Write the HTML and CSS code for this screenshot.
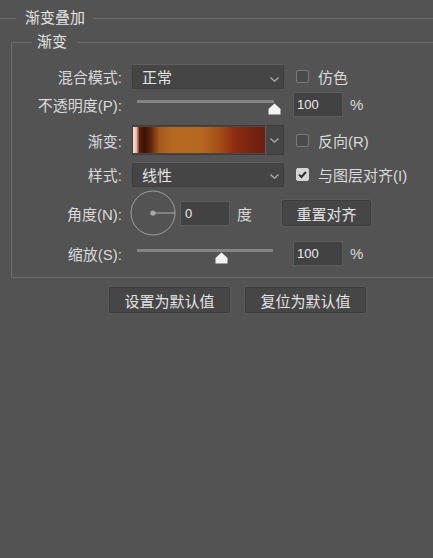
FILE: index.html
```html
<!DOCTYPE html>
<html lang="zh-CN">
<head>
    <meta charset="UTF-8">
    <meta name="viewport" content="width=device-width, initial-scale=1.0">
    <title>渐变叠加</title>
    <link rel="stylesheet" href="styles.css">
</head>
<body>
    <div class="panel">
        <!-- Section title -->
        <div class="section-title">
            <span class="rule rule-short"></span>
            <span class="title-text">渐变叠加</span>
            <span class="rule"></span>
        </div>

        <fieldset class="group">
            <legend>渐变</legend>

            <!-- Blend mode -->
            <div class="row row-a">
                <span class="label">混合模式:</span>
                <div class="dropdown">
                    <span>正常</span>
                    <svg class="chevron" width="9" height="5" viewBox="0 0 9 5"><path d="M0.5 0.5 L4.5 4.2 L8.5 0.5" fill="none" stroke="#b4b4b4" stroke-width="1.1"/></svg>
                </div>
                <div class="check"><span class="box"></span>仿色</div>
            </div>

            <!-- Opacity -->
            <div class="row row-a">
                <span class="label">不透明度(P):</span>
                <div class="slider">
                    <div class="track track-long">
                        <svg class="thumb" style="left: calc(100% - 6.5px);" width="13" height="12" viewBox="0 0 13 12"><path d="M6.5 0.5 L12.5 6 L12.5 11.5 L0.5 11.5 L0.5 6 Z" fill="#f2f2f2"/></svg>
                    </div>
                </div>
                <div class="number">100</div>
                <span class="unit">%</span>
            </div>

            <!-- Gradient -->
            <div class="row row-grad">
                <span class="label">渐变:</span>
                <div class="gradient-picker">
                    <div class="gradient"></div>
                    <div class="gradient-btn">
                        <svg class="chevron" width="9" height="5" viewBox="0 0 9 5"><path d="M0.5 0.5 L4.5 4.2 L8.5 0.5" fill="none" stroke="#b4b4b4" stroke-width="1.1"/></svg>
                    </div>
                </div>
                <div class="check"><span class="box"></span>反向(R)</div>
            </div>

            <!-- Style -->
            <div class="row row-style">
                <span class="label">样式:</span>
                <div class="dropdown">
                    <span>线性</span>
                    <svg class="chevron" width="9" height="5" viewBox="0 0 9 5"><path d="M0.5 0.5 L4.5 4.2 L8.5 0.5" fill="none" stroke="#b4b4b4" stroke-width="1.1"/></svg>
                </div>
                <div class="check">
                    <span class="box checked">
                        <svg width="11" height="11" viewBox="0 0 11 11"><path d="M2 5.6 L4.4 8 L9 3" fill="none" stroke="#2e2e2e" stroke-width="2"/></svg>
                    </span>与图层对齐(I)
                </div>
            </div>

            <!-- Angle -->
            <div class="row row-angle">
                <span class="label">角度(N):</span>
                <svg class="dial" width="46" height="46" viewBox="0 0 46 46">
                    <circle cx="23" cy="23" r="22" fill="none" stroke="#a0a0a0" stroke-width="1"/>
                    <line x1="23" y1="23" x2="45" y2="23" stroke="#b0b0b0" stroke-width="1"/>
                    <circle cx="23" cy="23" r="2.6" fill="#a8a8a8"/>
                </svg>
                <div class="number number-angle">0</div>
                <span class="unit">度</span>
                <div class="button button-reset">重置对齐</div>
            </div>

            <!-- Scale -->
            <div class="row row-a row-scale">
                <span class="label">缩放(S):</span>
                <div class="slider">
                    <div class="track track-short">
                        <svg class="thumb" style="left: calc(62% - 6.5px);" width="13" height="12" viewBox="0 0 13 12"><path d="M6.5 0.5 L12.5 6 L12.5 11.5 L0.5 11.5 L0.5 6 Z" fill="#f2f2f2"/></svg>
                    </div>
                </div>
                <div class="number">100</div>
                <span class="unit">%</span>
            </div>
        </fieldset>

        <!-- Default buttons -->
        <div class="actions">
            <div class="button button-wide">设置为默认值</div>
            <div class="button button-wide">复位为默认值</div>
        </div>
    </div>
</body>
</html>
```

FILE: styles.css
```css
body {
    margin: 0;
    background-color: #535353;
    color: #dadada;
    font-family: "Liberation Sans", "Noto Sans CJK SC", sans-serif;
    font-size: 15px;
}

.panel {
    width: 433px;
    height: 558px;
    overflow: hidden;
}

/* Title with lines on both sides */
.section-title {
    display: flex;
    align-items: center;
    height: 20px;
    margin-top: 8px;
}

.rule {
    flex: 1;
    height: 1px;
    background-color: #6c6c6c;
}

.rule-short {
    flex: none;
    width: 16px;
}

.title-text {
    padding: 0 8px 0 9px;
    line-height: 20px;
    color: #e4e4e4;
}

/* Group box */
.group {
    margin: 4px -4px 0 11px;
    padding: 0 0 11px 0;
    border: 1px solid #6c6c6c;
    min-width: 0;
}

.group legend {
    margin-left: 20px;
    padding: 0 10px 0 5px;
    line-height: 20px;
    color: #e4e4e4;
}

.row {
    display: flex;
    align-items: center;
}

.row-a {
    height: 25px;
    margin-top: 3px;
}

.row-a:first-of-type {
    margin-top: 12px;
}

.row-grad {
    height: 30px;
    margin-top: 8px;
}

.row-style {
    height: 26px;
    margin-top: 6px;
}

.row-angle {
    height: 46px;
    margin-top: 3px;
}

.row-scale {
    margin-top: 5px;
}

.label {
    width: 110px;
    margin-right: 10px;
    text-align: right;
    white-space: nowrap;
}

/* Dropdown */
.dropdown {
    width: 152px;
    height: 25px;
    box-sizing: border-box;
    display: flex;
    align-items: center;
    justify-content: space-between;
    padding: 0 4px 0 9px;
    background-color: #454545;
    border: 1px solid #3f3f3f;
    border-top-color: #5e5e5e;
    border-radius: 2px;
    color: #e6e6e6;
}

.chevron {
    display: block;
}

.dropdown .chevron {
    margin-top: 5px;
}

/* Checkbox */
.check {
    display: flex;
    align-items: center;
    margin-left: 12px;
    white-space: nowrap;
}

.box {
    width: 13px;
    height: 13px;
    box-sizing: border-box;
    margin-right: 9px;
    border: 1px solid #7a7a7a;
    border-radius: 2px;
    background-color: #4b4b4b;
    display: flex;
    align-items: center;
    justify-content: center;
}

.box.checked {
    background-color: #d6d6d6;
    border-color: #d6d6d6;
}

/* Slider */
.slider {
    width: 152px;
    height: 25px;
}

.track {
    position: relative;
    height: 3px;
    margin: 8px 0 0 5px;
    background-color: #858585;
}

.track-long {
    width: 137px;
}

.track-short {
    width: 136px;
}

.thumb {
    position: absolute;
    top: 3px;
}

/* Number fields */
.number {
    width: 50px;
    height: 25px;
    box-sizing: border-box;
    margin-left: 9px;
    padding-left: 3px;
    background-color: #424242;
    border: 1px solid #5c5c5c;
    font-size: 13px;
    line-height: 23px;
    color: #ececec;
}

.number-angle {
    margin-left: 4px;
    padding-left: 4px;
}

.unit {
    margin-left: 7px;
}

/* Gradient swatch */
.gradient-picker {
    width: 152px;
    height: 30px;
    box-sizing: border-box;
    display: flex;
    border: 1px solid #3e3e3e;
    background-color: #464646;
}

.gradient {
    flex: 1;
    margin: 1px 0 1px 0;
    background: linear-gradient(to right, #f6dfd2 0%, #e9bfae 2.5%, #5a1a0a 5%, #3c1206 9%, #5a220c 13%, #a65a1c 20%, #b86a22 30%, #b7681f 52%, #a85018 64%, #8e3010 76%, #7a2410 88%, #6c1f10 100%);
}

.gradient-btn {
    width: 17px;
    display: flex;
    align-items: center;
    justify-content: center;
    border-left: 1px solid #5e5e5e;
}

/* Angle dial */
.dial {
    display: block;
    margin-left: -2px;
}

/* Buttons */
.button {
    height: 26px;
    box-sizing: border-box;
    display: flex;
    align-items: center;
    justify-content: center;
    background-color: #464646;
    border: 1px solid #3c3c3c;
    box-shadow: 0 0 0 1px #5a5a5a;
    border-radius: 2px;
    color: #e4e4e4;
}

.button-reset {
    width: 89px;
    margin-left: 30px;
}

.actions {
    display: flex;
    gap: 15px;
    margin-top: 9px;
    padding-left: 109px;
}

.button-wide {
    width: 121px;
}
```
